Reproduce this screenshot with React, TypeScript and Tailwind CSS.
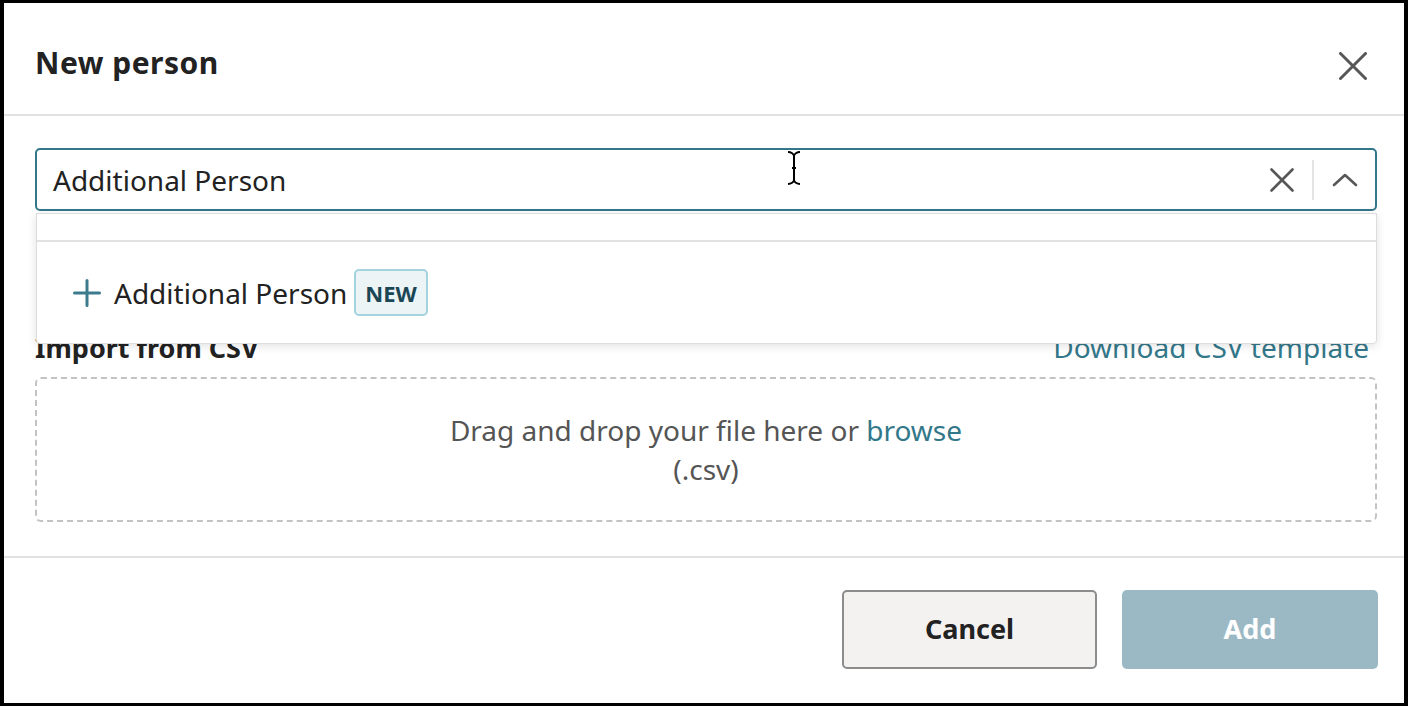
import React from "react";

const XIcon = ({ size, stroke }: { size: number; stroke: number }) => (
  <svg width={size} height={size} viewBox={`0 0 ${size} ${size}`} fill="none">
    <path
      d={`M1.5 1.5L${size - 1.5} ${size - 1.5}M${size - 1.5} 1.5L1.5 ${size - 1.5}`}
      stroke="#575757"
      strokeWidth={stroke}
      strokeLinecap="round"
    />
  </svg>
);

export default function App() {
  return (
    <div
      className="w-[1408px] h-[706px] bg-black pt-[3px] px-[4px] pb-[3px] overflow-hidden"
      style={{ fontFamily: '"Noto Sans", "Open Sans", sans-serif' }}
    >
      <div className="relative w-full h-full bg-white flex flex-col">
        {/* Header */}
        <div className="h-[113px] shrink-0 flex items-center justify-between pt-[8px] pl-[31px] pr-[36px] border-b-2 border-[#e2e2e2]">
          <h1 className="text-[30px] font-bold tracking-[0.5px] text-[#222222] leading-none">New person</h1>
          <button className="flex items-center justify-center w-[30px] h-[30px] mt-[6px]">
            <XIcon size={28} stroke={3} />
          </button>
        </div>

        {/* Body */}
        <div className="relative h-[440px] shrink-0 pl-[31px] pr-[27px] pt-[32px] pb-[34px] flex flex-col">
          {/* Combobox */}
          <div className="relative">
            <div className="h-[63px] border-2 border-[#33788a] rounded-[5px] flex items-center pl-[16px]">
              <span className="flex-1 text-[28px] text-[#222222] leading-none">Additional Person</span>
              <div className="flex items-center h-full">
                <button className="w-[48px] h-full flex items-center justify-center pr-[12px]">
                  <XIcon size={24} stroke={2.6} />
                </button>
                <div className="w-[2px] h-[40px] bg-[#e4e4e4]" />
                <button className="w-[61px] h-full flex items-center justify-center">
                  <svg width="26" height="14" viewBox="0 0 26 14" fill="none">
                    <path d="M2 12L13 2L24 12" stroke="#575757" strokeWidth="2.6" strokeLinecap="round" strokeLinejoin="round" />
                  </svg>
                </button>
              </div>
            </div>

            {/* Dropdown */}
            <div className="absolute left-[1px] right-0 top-[65px] z-10 bg-white border border-[#dddddd] rounded-b-[4px] shadow-[0_2px_10px_rgba(0,0,0,0.12)]">
              <div className="h-[28px] border-b-2 border-[#e2e2e2]" />
              <div className="h-[101px] flex items-center pl-[36px]">
                <svg width="28" height="28" viewBox="0 0 28 28" fill="none" className="mr-[13px]">
                  <path d="M14 1.5V26.5M1.5 14H26.5" stroke="#3b7b8d" strokeWidth="3" strokeLinecap="round" />
                </svg>
                <span className="text-[28px] text-[#222222] leading-none">Additional Person</span>
                <span className="ml-[7px] h-[47px] px-[9px] flex items-center rounded-[5px] border-2 border-[#a3d3df] bg-[#ecf4f6] text-[22px] font-bold text-[#1b4654] leading-none">
                  NEW
                </span>
              </div>
            </div>
          </div>

          {/* Import heading row (partly covered) */}
          <div className="mt-[118px] flex items-center justify-between h-[36px]">
            <span className="text-[27px] font-bold text-[#222222] leading-none">Import from CSV</span>
            <span className="text-[28px] text-[#33788a] leading-none mr-[8px]">Download CSV template</span>
          </div>

          {/* Drop zone */}
          <div className="mt-[12px] h-[145px] border-2 border-dashed border-[#c3c3c3] rounded-[6px] flex flex-col items-center justify-center text-[28px] text-[#555555] leading-[39px]">
            <div>
              Drag and drop your file here or <span className="text-[#33788a]">browse</span>
            </div>
            <div>(.csv)</div>
          </div>
        </div>

        {/* Footer */}
        <div className="flex-1 border-t-2 border-[#e2e2e2] flex items-start justify-end gap-[25px] pt-[32px] pr-[26px]">
          <button className="w-[255px] h-[79px] rounded-[5px] border-2 border-[#8c8c8c] bg-[#f3f2f1] text-[27px] font-bold text-[#222222] flex items-center justify-center">
            Cancel
          </button>
          <button className="w-[256px] h-[79px] rounded-[5px] bg-[#9bb9c4] text-[27px] font-bold text-white flex items-center justify-center">
            Add
          </button>
        </div>

        {/* I-beam cursor */}
        <svg
          className="absolute left-[782px] top-[147px] z-20"
          width="16"
          height="36"
          viewBox="0 0 16 36"
          fill="none"
        >
          <path d="M2 2C5 2 8 4 8 6V30C8 32 5 34 2 34M14 2C11 2 8 4 8 6M14 34C11 34 8 32 8 30M6 18H10" stroke="white" strokeWidth="4" />
          <path d="M2 2C5 2 8 4 8 6V30C8 32 5 34 2 34M14 2C11 2 8 4 8 6M14 34C11 34 8 32 8 30M6 18H10" stroke="black" strokeWidth="2" />
        </svg>
      </div>
    </div>
  );
}
